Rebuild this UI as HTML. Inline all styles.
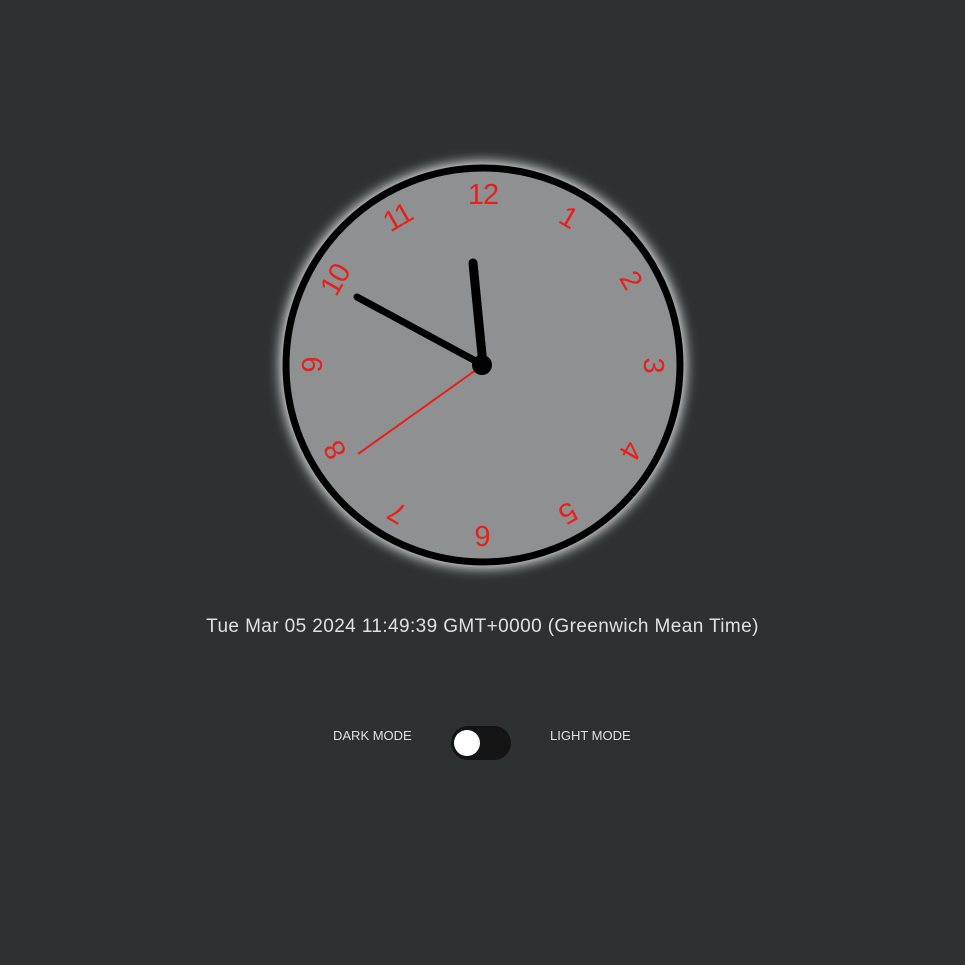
<!DOCTYPE html>
<html><head><style>
html,body{margin:0;padding:0;background:#2d3132;width:965px;height:965px;overflow:hidden;font-family:"Liberation Sans",sans-serif;}
.date{position:absolute;left:0;width:965px;top:616px;text-align:center;color:#dde3e1;font-size:19px;letter-spacing:0.4px;}
.lbl{position:absolute;top:728px;color:#dde3e1;font-size:13px;}
.tog{position:absolute;left:451px;top:726px;width:60px;height:34px;border-radius:17px;background:#141414;}
.knob{position:absolute;left:3px;top:4px;width:26px;height:26px;border-radius:50%;background:#fff;}
</style></head><body>
<svg width="965" height="965" style="position:absolute;left:0;top:0">
<defs><filter id="g" x="-20%" y="-20%" width="140%" height="140%"><feGaussianBlur stdDeviation="6"/></filter></defs>
<circle cx="483" cy="365" r="203" fill="#e8e8e8" filter="url(#g)"/>
<circle cx="483" cy="365" r="197" fill="#8f9091" stroke="#000" stroke-width="7"/>
<g fill="#e8201b" font-family="Liberation Sans, sans-serif" font-size="29" text-anchor="middle" letter-spacing="-1">
<text transform="translate(483,365) rotate(0) translate(0,-161)">12</text>
<text transform="translate(483,365) rotate(30) translate(0,-161)">1</text>
<text transform="translate(483,365) rotate(60) translate(0,-161)">2</text>
<text transform="translate(483,365) rotate(90) translate(0,-161)">3</text>
<text transform="translate(483,365) rotate(120) translate(0,-161)">4</text>
<text transform="translate(483,365) rotate(150) translate(0,-161)">5</text>
<text transform="translate(483,365) rotate(180) translate(0,-161)">6</text>
<text transform="translate(483,365) rotate(210) translate(0,-161)">7</text>
<text transform="translate(483,365) rotate(240) translate(0,-161)">8</text>
<text transform="translate(483,365) rotate(270) translate(0,-161)">9</text>
<text transform="translate(483,365) rotate(300) translate(0,-161)">10</text>
<text transform="translate(483,365) rotate(330) translate(0,-161)">11</text>
</g>
<line x1="483" y1="365" x2="357" y2="297" stroke="#000" stroke-width="7" stroke-linecap="round"/>
<line x1="483" y1="365" x2="473" y2="263" stroke="#000" stroke-width="9" stroke-linecap="round"/>
<line x1="483" y1="365" x2="358" y2="454" stroke="#e8201b" stroke-width="2"/>
<circle cx="482" cy="365" r="10" fill="#000"/>
</svg>
<div class="date">Tue Mar 05 2024 11:49:39 GMT+0000 (Greenwich Mean Time)</div>
<div class="lbl" style="left:333px">DARK MODE</div>
<div class="tog"><div class="knob"></div></div>
<div class="lbl" style="left:550px">LIGHT MODE</div>
</body></html>
